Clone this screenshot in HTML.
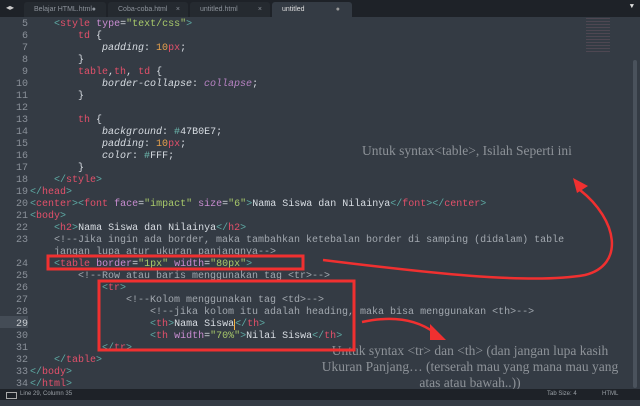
<!DOCTYPE html>
<html><head><meta charset="utf-8"><style>
body{margin:0;width:640px;height:400px;overflow:hidden;background:#343b44;position:relative;font-family:"Liberation Mono",monospace}
.tabs{position:absolute;left:0;top:0;width:640px;height:17px;background:#1e2228}
.tab{position:absolute;top:2px;height:15px;background:#2a2f36;color:#8d939b;font:7px "Liberation Sans",sans-serif;line-height:15px;padding-left:10px;box-sizing:border-box;border-radius:3px 3px 0 0}
.code{position:absolute;left:0;font-size:10px;line-height:12px;color:#d8dde3;white-space:pre}
.ln{position:absolute;left:0;width:28px;text-align:right;color:#8a9099}
.l{position:absolute;left:30px}
.t{color:#e2506a}.b{color:#5eaaa4}.a{color:#c88cd0}.s{color:#a8c96a}.c{color:#a2a8af}.n{color:#e6a14d}.i{font-style:italic}.v{color:#b783c3}.h{color:#6bb7ad}
.status{position:absolute;left:0;top:389px;width:640px;height:11px;background:#1e2228;color:#9aa0a6;font:6px "Liberation Sans",sans-serif;line-height:11px}
.note{position:absolute;font-family:"Liberation Serif",serif;color:#8d9298;font-size:13.5px;line-height:16px}
</style></head><body>
<div class="tabs">
<span style="position:absolute;left:6px;top:3px;color:#ccc;font-size:8px">◂▸</span>
<div class="tab" style="left:24px;width:82px;background:#252a30">Belajar HTML.html<span style="position:absolute;right:10px">●</span></div>
<div class="tab" style="left:108px;width:80px;background:#252a30">Coba-coba.html<span style="position:absolute;right:8px">×</span></div>
<div class="tab" style="left:190px;width:80px;background:#252a30">untitled.html<span style="position:absolute;right:8px">×</span></div>
<div class="tab" style="left:272px;width:80px;background:#343b44;color:#ddd">untitled<span style="position:absolute;right:12px;color:#999">●</span></div>
<span style="position:absolute;right:6px;top:3px;color:#ddd;font-size:7px">▼</span>
</div>
<div style="position:absolute;left:0;top:316px;width:28px;height:12px;background:#444c56"></div>
<div class="code" style="top:22px">
<div class="ln" style="top:-3px">5</div><div class="l" style="top:-3px">    <span class="b">&lt;</span><span class="t">style</span> <span class="a">type</span>=<span class="s">"text/css"</span><span class="b">&gt;</span></div>
<div class="ln" style="top:9px">6</div><div class="l" style="top:9px">        <span class="t">td</span> {</div>
<div class="ln" style="top:21px">7</div><div class="l" style="top:21px">            <span class="i">padding</span>: <span class="n">10</span><span class="t">px</span>;</div>
<div class="ln" style="top:33px">8</div><div class="l" style="top:33px">        }</div>
<div class="ln" style="top:45px">9</div><div class="l" style="top:45px">        <span class="t">table</span>,<span class="t">th</span>, <span class="t">td</span> {</div>
<div class="ln" style="top:57px">10</div><div class="l" style="top:57px">            <span class="i">border-collapse</span>: <span class="v i">collapse</span>;</div>
<div class="ln" style="top:69px">11</div><div class="l" style="top:69px">        }</div>
<div class="ln" style="top:81px">12</div>
<div class="ln" style="top:93px">13</div><div class="l" style="top:93px">        <span class="t">th</span> {</div>
<div class="ln" style="top:105px">14</div><div class="l" style="top:105px">            <span class="i">background</span>: <span class="h">#</span>47B0E7;</div>
<div class="ln" style="top:117px">15</div><div class="l" style="top:117px">            <span class="i">padding</span>: <span class="n">10</span><span class="t">px</span>;</div>
<div class="ln" style="top:129px">16</div><div class="l" style="top:129px">            <span class="i">color</span>: <span class="h">#</span>FFF;</div>
<div class="ln" style="top:141px">17</div><div class="l" style="top:141px">        }</div>
<div class="ln" style="top:153px">18</div><div class="l" style="top:153px">    <span class="b">&lt;/</span><span class="t">style</span><span class="b">&gt;</span></div>
<div class="ln" style="top:165px">19</div><div class="l" style="top:165px"><span class="b">&lt;/</span><span class="t">head</span><span class="b">&gt;</span></div>
<div class="ln" style="top:177px">20</div><div class="l" style="top:177px"><span class="b">&lt;</span><span class="t">center</span><span class="b">&gt;&lt;</span><span class="t">font</span> <span class="a">face</span>=<span class="s">"impact"</span> <span class="a">size</span>=<span class="s">"6"</span><span class="b">&gt;</span>Nama Siswa dan Nilainya<span class="b">&lt;/</span><span class="t">font</span><span class="b">&gt;&lt;/</span><span class="t">center</span><span class="b">&gt;</span></div>
<div class="ln" style="top:189px">21</div><div class="l" style="top:189px"><span class="b">&lt;</span><span class="t">body</span><span class="b">&gt;</span></div>
<div class="ln" style="top:201px">22</div><div class="l" style="top:201px">    <span class="b">&lt;</span><span class="t">h2</span><span class="b">&gt;</span>Nama Siswa dan Nilainya<span class="b">&lt;/</span><span class="t">h2</span><span class="b">&gt;</span></div>
<div class="ln" style="top:213px">23</div><div class="l c" style="top:213px">    &lt;!--Jika ingin ada border, maka tambahkan ketebalan border di samping (didalam) table</div>
<div class="l c" style="top:225px">    jangan lupa atur ukuran panjangnya--&gt;</div>
<div class="ln" style="top:237px">24</div><div class="l" style="top:237px">    <span class="b">&lt;</span><span class="t">table</span> <span class="a">border</span>=<span class="s">"1px"</span> <span class="a">width</span>=<span class="s">"80px"</span><span class="b">&gt;</span></div>
<div class="ln" style="top:249px">25</div><div class="l c" style="top:249px">        &lt;!--Row atau baris menggunakan tag &lt;tr&gt;--&gt;</div>
<div class="ln" style="top:261px">26</div><div class="l" style="top:261px">            <span class="b">&lt;</span><span class="t">tr</span><span class="b">&gt;</span></div>
<div class="ln" style="top:273px">27</div><div class="l c" style="top:273px">                &lt;!--Kolom menggunakan tag &lt;td&gt;--&gt;</div>
<div class="ln" style="top:285px">28</div><div class="l c" style="top:285px">                    &lt;!--jika kolom itu adalah heading, maka bisa menggunakan &lt;th&gt;--&gt;</div>
<div class="ln" style="top:297px;color:#c8ccd0">29</div><div class="l" style="top:297px">                    <span class="b">&lt;</span><span class="t">th</span><span class="b">&gt;</span>Nama Siswa<span style="border-left:1px solid #f5b041"></span><span class="b">&lt;/</span><span class="t">th</span><span class="b">&gt;</span></div>
<div class="ln" style="top:309px">30</div><div class="l" style="top:309px">                    <span class="b">&lt;</span><span class="t">th</span> <span class="a">width</span>=<span class="s">"70%"</span><span class="b">&gt;</span>Nilai Siswa<span class="b">&lt;/</span><span class="t">th</span><span class="b">&gt;</span></div>
<div class="ln" style="top:321px">31</div><div class="l" style="top:321px">            <span class="b">&lt;/</span><span class="t">tr</span><span class="b">&gt;</span></div>
<div class="ln" style="top:333px">32</div><div class="l" style="top:333px">    <span class="b">&lt;/</span><span class="t">table</span><span class="b">&gt;</span></div>
<div class="ln" style="top:345px">33</div><div class="l" style="top:345px"><span class="b">&lt;/</span><span class="t">body</span><span class="b">&gt;</span></div>
<div class="ln" style="top:357px">34</div><div class="l" style="top:357px"><span class="b">&lt;/</span><span class="t">html</span><span class="b">&gt;</span></div>
</div>
<div style="position:absolute;left:633px;top:60px;width:4px;height:328px;background:#4a525c;border-radius:2px"></div>
<div style="position:absolute;left:586px;top:18px;width:24px;height:34px;opacity:.25;background:repeating-linear-gradient(#9a6b7a 0 1px,transparent 1px 3px)"></div>
<div class="note" style="left:362px;top:143px">Untuk syntax&lt;table&gt;, Isilah Seperti ini</div>
<div class="note" style="left:300px;top:343px;width:340px;text-align:center">Untuk syntax &lt;tr&gt; dan &lt;th&gt; (dan jangan lupa kasih<br>Ukuran Panjang… (terserah mau yang mana mau yang<br>atas atau bawah..))</div>
<svg style="position:absolute;left:0;top:0" width="640" height="400">
<g fill="none" stroke="#f03030" stroke-width="3">
<rect x="48" y="256" width="255" height="13"/>
<rect x="99" y="281" width="255" height="69"/>
<path d="M323,260 C420,272 530,285 585,275 C625,265 618,220 580,190" stroke-width="2.5"/>
<path d="M362,322 C390,316 415,318 435,333" stroke-width="2.5"/>
</g>
<polygon points="573,178 588,186 577,193" fill="#f03030"/>
<polygon points="446,340 430,324 430,340" fill="#f03030"/>
</svg>
<div class="status"><span style="position:absolute;left:6px;top:3px;width:9px;height:5px;border:1px solid #aaa"></span><span style="position:absolute;left:20px">Line 29, Column 35</span><span style="position:absolute;left:547px">Tab Size: 4</span><span style="position:absolute;left:602px">HTML</span></div>
</body></html>
